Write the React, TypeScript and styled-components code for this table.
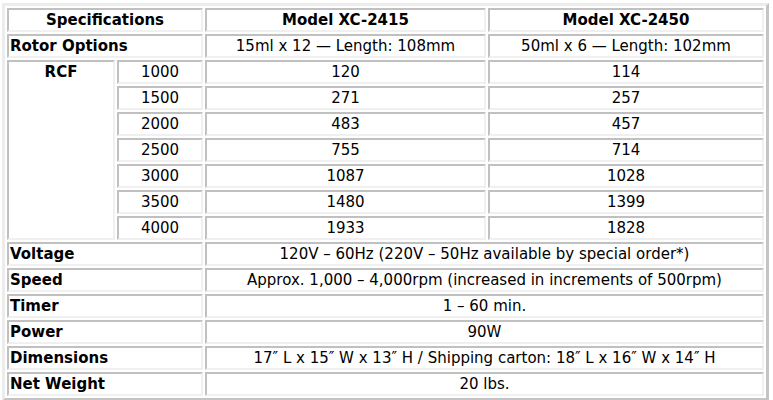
import React from 'react';
import styled, { createGlobalStyle } from 'styled-components';

const GlobalStyle = createGlobalStyle`
  body {
    margin: 0;
    background: #ffffff;
    font-family: "DejaVu Sans", Verdana, sans-serif;
    color: #000;
  }
`;

const SpecTable = styled.table`
  margin: 3px 2px 2px;
  width: 767px;
  border-collapse: separate;
  border-spacing: 2px;
  border: 3px solid;
  border-color: #ececec #c4c4c4 #c4c4c4 #ececec;
  font-size: 15px;
`;

const Cell = styled.td<{ $align?: 'left' | 'center'; $bold?: boolean; $top?: boolean }>`
  height: 17.85px;
  padding: 1px 1px;
  border: 2px solid;
  border-color: #c0c0c0 #f0f0f0 #f0f0f0 #c0c0c0;
  text-align: ${(p) => p.$align ?? 'center'};
  font-weight: ${(p) => (p.$bold ? 700 : 400)};
  vertical-align: ${(p) => (p.$top ? 'top' : 'middle')};
  white-space: nowrap;
  line-height: 18px;
`;

const rcf = [
  ['1000', '120', '114'],
  ['1500', '271', '257'],
  ['2000', '483', '457'],
  ['2500', '755', '714'],
  ['3000', '1087', '1028'],
  ['3500', '1480', '1399'],
  ['4000', '1933', '1828'],
];

const shared = [
  ['Voltage', '120V – 60Hz (220V – 50Hz available by special order*)'],
  ['Speed', 'Approx. 1,000 – 4,000rpm (increased in increments of 500rpm)'],
  ['Timer', '1 – 60 min.'],
  ['Power', '90W'],
  ['Dimensions', '17″ L x 15″ W x 13″ H / Shipping carton: 18″ L x 16″ W x 14″ H'],
  ['Net Weight', '20 lbs.'],
];

export default function App() {
  return (
    <>
      <GlobalStyle />
      <SpecTable>
        <colgroup>
          <col style={{ width: 108 }} />
          <col style={{ width: 86 }} />
          <col style={{ width: 281 }} />
          <col />
        </colgroup>
        <tbody>
          <tr>
            <Cell colSpan={2} $bold>Specifications</Cell>
            <Cell $bold>Model XC-2415</Cell>
            <Cell $bold>Model XC-2450</Cell>
          </tr>
          <tr>
            <Cell colSpan={2} $bold $align="left">Rotor Options</Cell>
            <Cell>15ml x 12 — Length: 108mm</Cell>
            <Cell>50ml x 6 — Length: 102mm</Cell>
          </tr>
          {rcf.map(([speed, a, b], i) => (
            <tr key={speed}>
              {i === 0 && (
                <Cell rowSpan={rcf.length} $bold $top>RCF</Cell>
              )}
              <Cell>{speed}</Cell>
              <Cell>{a}</Cell>
              <Cell>{b}</Cell>
            </tr>
          ))}
          {shared.map(([label, value]) => (
            <tr key={label}>
              <Cell colSpan={2} $bold $align="left">{label}</Cell>
              <Cell colSpan={2}>{value}</Cell>
            </tr>
          ))}
        </tbody>
      </SpecTable>
    </>
  );
}
